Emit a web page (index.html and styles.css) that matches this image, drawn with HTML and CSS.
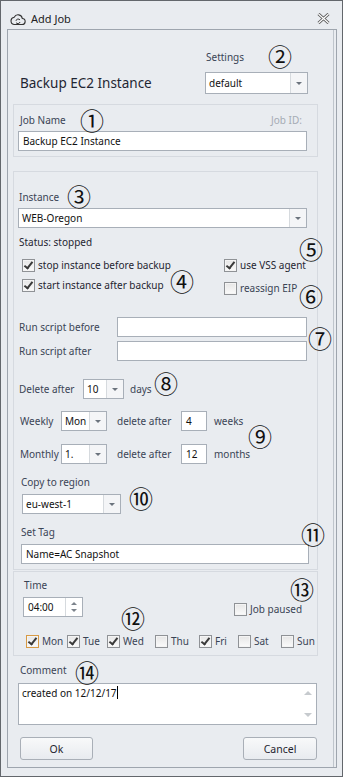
FILE: index.html
```html
<!DOCTYPE html>
<html lang="en">
<head>
    <meta charset="UTF-8">
    <meta name="viewport" content="width=device-width, initial-scale=1.0">
    <title>Add Job</title>
    <link rel="stylesheet" href="styles.css">
</head>
<body>
    <div class="window">
        <div class="titlebar">
            <svg class="app-icon" width="16" height="14" viewBox="0 0 16 14">
                <path d="M4 12.5 H12 A3 3 0 0 0 12.3 6.5 A4.3 4.3 0 0 0 4.2 5.2 A3.7 3.7 0 0 0 4 12.5 Z" fill="none" stroke="#333" stroke-width="1.1"/>
                <path d="M6 8.8 A2.2 2.2 0 0 1 10 8" fill="none" stroke="#333" stroke-width="1"/>
                <path d="M10 10 A2.2 2.2 0 0 1 6 10.6" fill="none" stroke="#333" stroke-width="1"/>
            </svg>
            <span class="title">Add Job</span>
            <svg class="close" width="13" height="11" viewBox="0 0 13 11">
                <path d="M1.5 1 L11.5 10 M11.5 1 L1.5 10" stroke="#555" stroke-width="3"/>
                <path d="M1.5 1 L11.5 10 M11.5 1 L1.5 10" stroke="#fff" stroke-width="1.2"/>
            </svg>
        </div>

        <div class="frame">
            <div class="header">
                <div class="job-title">Backup EC2 Instance</div>
                <div class="settings">
                    <div class="label">Settings</div>
                    <div class="select settings-select"><span>default</span><i class="drop"></i></div>
                </div>
            </div>

            <div class="group job-group">
                <div class="label-row">
                    <span class="label">Job Name</span>
                    <span class="job-id">Job ID:</span>
                </div>
                <div class="input job-input">Backup EC2 Instance</div>
            </div>

            <div class="group instance-group">
                <div class="label instance-label">Instance</div>
                <div class="select instance-select"><span>WEB-Oregon</span><i class="drop"></i></div>
                <div class="status">Status: stopped</div>

                <div class="checks">
                    <div class="check-col left-col">
                        <label class="check row20"><i class="box on"></i>stop instance before backup</label>
                        <label class="check row20"><i class="box on"></i>start instance after backup</label>
                    </div>
                    <div class="check-col">
                        <label class="check row20"><i class="box on"></i>use VSS agent</label>
                        <label class="check row20 eip"><i class="box"></i>reassign EIP</label>
                    </div>
                </div>

                <div class="script-row first">
                    <span class="label script-label">Run script before</span>
                    <div class="input script-input"></div>
                </div>
                <div class="script-row">
                    <span class="label script-label">Run script after</span>
                    <div class="input script-input"></div>
                </div>

                <div class="row delete-row">
                    <span class="label delete-label">Delete after</span>
                    <div class="select small-select"><span>10</span><i class="drop"></i></div>
                    <span class="label days">days</span>
                </div>
                <div class="row weekly-row">
                    <span class="label period-label">Weekly</span>
                    <div class="select period-select"><span>Mon</span><i class="drop"></i></div>
                    <span class="label after-label">delete after</span>
                    <div class="input num-input">4</div>
                    <span class="label unit">weeks</span>
                </div>
                <div class="row monthly-row">
                    <span class="label period-label">Monthly</span>
                    <div class="select period-select"><span>1.</span><i class="drop"></i></div>
                    <span class="label after-label">delete after</span>
                    <div class="input num-input">12</div>
                    <span class="label unit">months</span>
                </div>

                <div class="label sub-label copy-label">Copy to region</div>
                <div class="select region-select"><span>eu-west-1</span><i class="drop"></i></div>

                <div class="label sub-label tag-label">Set Tag</div>
                <div class="input tag-input">Name=AC Snapshot</div>
            </div>

            <div class="group time-group">
                <div class="label time-label">Time</div>
                <div class="time-row">
                    <div class="spin">
                        <span>04:00</span>
                        <div class="spin-btns"><i class="up"></i><i class="down"></i></div>
                    </div>
                    <label class="check paused"><i class="box"></i>Job paused</label>
                </div>
                <div class="days-row">
                    <label class="check"><i class="box on hover"></i>Mon</label>
                    <label class="check"><i class="box on"></i>Tue</label>
                    <label class="check"><i class="box on"></i>Wed</label>
                    <label class="check"><i class="box"></i>Thu</label>
                    <label class="check"><i class="box on"></i>Fri</label>
                    <label class="check"><i class="box"></i>Sat</label>
                    <label class="check"><i class="box"></i>Sun</label>
                </div>
            </div>

            <div class="label comment-label">Comment</div>
            <div class="textarea">
                <div class="text">created on 12/12/17<span class="caret"></span></div>
                <div class="scroll"><i class="up"></i><i class="down"></i></div>
            </div>

            <div class="buttons">
                <button class="btn">Ok</button>
                <button class="btn">Cancel</button>
            </div>
        </div>

        <span class="callout c1">①</span>
        <span class="callout c2">②</span>
        <span class="callout c3">③</span>
        <span class="callout c4">④</span>
        <span class="callout c5">⑤</span>
        <span class="callout c6">⑥</span>
        <span class="callout c7">⑦</span>
        <span class="callout c8">⑧</span>
        <span class="callout c9">⑨</span>
        <span class="callout c10">⑩</span>
        <span class="callout c11">⑪</span>
        <span class="callout c12">⑫</span>
        <span class="callout c13">⑬</span>
        <span class="callout c14">⑭</span>
    </div>
</body>
</html>
```

FILE: styles.css
```css
body {
    margin: 0;
    font-family: "Noto Sans", sans-serif;
    font-size: 10px;
    color: #242b38;
}
.window {
    position: relative;
    width: 343px;
    height: 777px;
    box-sizing: border-box;
    border: 1px solid #63676c;
    background-color: #e9ecf0;
    padding: 0 5px 0 6px;
}

/* title bar */
.titlebar {
    height: 28px;
    box-sizing: border-box;
    padding: 7px 0 0 3px;
    display: flex;
    align-items: center;
}
.app-icon {
    margin-right: 5px;
}
.title {
    font-size: 11px;
    color: #222;
}
.close {
    margin-left: auto;
    margin-right: 7px;
}

/* main frame */
.frame {
    border: 1px solid #9ea5ae;
    box-shadow: inset -2px 0 0 #e9ecf0, inset -3px 0 0 #bfc5cc;
    padding: 0 18px 7px 5px;
}
.header {
    height: 74px;
    box-sizing: border-box;
    display: flex;
    align-items: flex-end;
    justify-content: space-between;
    padding: 0 10px 10px 7px;
}
.job-title {
    font-size: 13.5px;
    line-height: 20px;
    margin-bottom: 1px;
    color: #1f2633;
}
.settings .label {
    margin: 0 0 8px 1px;
}
.label {
    color: #3a4455;
    line-height: 14px;
}

/* inputs */
.input, .select, .spin, .textarea {
    box-sizing: border-box;
    height: 20px;
    border: 1px solid #a8afb8;
    background-color: #fff;
    color: #111;
    line-height: 18px;
}
.input {
    padding-left: 4px;
}
.select {
    display: flex;
}
.select span {
    flex: 1;
    padding-left: 3px;
}
.drop {
    width: 16px;
    border-left: 1px solid #d6dade;
    background-color: #f4f5f7;
    display: flex;
    align-items: center;
    justify-content: center;
}
.drop::after {
    content: "";
    border-left: 3px solid transparent;
    border-right: 3px solid transparent;
    border-top: 3px solid #6b737d;
}
.settings-select {
    width: 103px;
    height: 22px;
    line-height: 20px;
}

/* groups */
.group {
    border: 1px solid #d6dae0;
    padding: 0 10px 5px 4px;
}
.label-row {
    display: flex;
    justify-content: space-between;
    margin-top: 8px;
    padding-left: 2px;
}
.job-id {
    color: #a5abb4;
    line-height: 14px;
    margin-right: 5px;
}
.job-input {
    margin-top: 4px;
}

.instance-group {
    margin-top: 14px;
}
.instance-label {
    margin: 18px 0 0 1px;
}
.instance-select {
    margin-top: 4px;
}
.status {
    margin: 7px 0 0 1px;
    line-height: 14px;
    color: #1f2530;
}
.checks {
    display: flex;
    margin-top: 6px;
}
.left-col {
    width: 206px;
}
.check {
    display: flex;
    align-items: center;
    gap: 3px;
    color: #1f2530;
    line-height: 14px;
}
.row20 {
    height: 20px;
}
.left-col .check {
    margin-left: 4px;
}
.eip {
    margin-top: 3px;
    color: #3a4455;
}
.box {
    position: relative;
    width: 13px;
    height: 13px;
    box-sizing: border-box;
    border: 1px solid #8f9296;
    background: linear-gradient(#e6e6e6, #fbfbfb);
    box-shadow: inset 0 0 0 1px #f4f4f4;
}
.box.on::after {
    content: "";
    position: absolute;
    left: 3px;
    top: 0;
    width: 3px;
    height: 7px;
    border: solid #3a3a3a;
    border-width: 0 2px 2px 0;
    transform: rotate(38deg);
}
.box.hover {
    border-color: #d79a45;
}

.script-row {
    display: flex;
    margin-top: 4px;
}
.script-row.first {
    margin-top: 19px;
}
.script-label {
    width: 98px;
    margin-left: 1px;
    line-height: 20px;
}
.script-input {
    width: 190px;
}

.row {
    display: flex;
    align-items: center;
}
.delete-row {
    margin-top: 18px;
}
.weekly-row {
    margin-top: 12px;
}
.monthly-row {
    margin-top: 13px;
}
.delete-label {
    width: 64px;
    margin-left: 1px;
}
.small-select {
    width: 41px;
}
.days {
    margin-left: 6px;
}
.period-label {
    width: 41px;
    margin-left: 2px;
}
.period-select {
    width: 46px;
}
.after-label {
    width: 64px;
    margin-left: 10px;
}
.num-input {
    width: 26px;
}
.unit {
    margin-left: 7px;
}
.sub-label {
    margin-left: 3px;
}
.copy-label {
    margin-top: 11px;
}
.region-select {
    width: 99px;
    margin: 5px 0 0 4px;
}
.tag-label {
    margin-top: 11px;
}
.tag-input {
    width: 288px;
    margin: 5px 0 0 3px;
}

/* time group */
.time-group {
    margin-top: 1px;
    padding-bottom: 7px;
}
.time-label {
    margin: 6px 0 0 6px;
}
.time-row {
    display: flex;
    margin-top: 5px;
}
.spin {
    width: 60px;
    margin-left: 5px;
    display: flex;
}
.spin span {
    flex: 1;
    padding-left: 4px;
}
.spin-btns {
    width: 16px;
    border-left: 1px solid #d6dade;
    display: flex;
    flex-direction: column;
    align-items: center;
    justify-content: center;
    gap: 4px;
}
.up, .down {
    display: block;
    border-left: 3px solid transparent;
    border-right: 3px solid transparent;
}
.up {
    border-bottom: 3px solid #7c838c;
}
.down {
    border-top: 3px solid #7c838c;
}
.paused {
    margin-left: 151px;
    align-self: flex-end;
    height: 16px;
    color: #3a4455;
}
.days-row {
    display: grid;
    grid-template-columns: 41px 40px 48px 44px 39px 43px auto;
    margin: 17px 0 0 8px;
}
.days-row .check {
    color: #3a4455;
}

/* comment */
.comment-label {
    margin: 7px 0 0 7px;
}
.textarea {
    display: flex;
    width: 299px;
    height: 42px;
    margin: 6px 0 0 5px;
}
.textarea .text {
    flex: 1;
    padding: 1px 3px;
    line-height: 16px;
}
.caret {
    display: inline-block;
    width: 1px;
    height: 13px;
    background-color: #000;
    vertical-align: -2px;
}
.scroll {
    width: 16px;
    display: flex;
    flex-direction: column;
    align-items: center;
    justify-content: space-between;
    padding: 7px 0;
}
.scroll .up {
    border-bottom-color: #c6cace;
    border-left-width: 4px;
    border-right-width: 4px;
    border-bottom-width: 4px;
}
.scroll .down {
    border-top-color: #c6cace;
    border-left-width: 4px;
    border-right-width: 4px;
    border-top-width: 4px;
}

.buttons {
    display: flex;
    justify-content: space-between;
    margin: 12px 1px 0 7px;
}
.btn {
    width: 73px;
    height: 23px;
    border: 1px solid #a9afb7;
    border-radius: 3px;
    background: linear-gradient(#f8f9fa, #e8ebef);
    font-family: "Noto Sans", sans-serif;
    font-size: 10.5px;
    color: #1f2530;
    padding: 0;
}
.btn + .btn {
    width: 74px;
}

/* numbered callouts drawn over the dialog */
.callout {
    position: absolute;
    width: 24px;
    height: 22px;
    line-height: 22px;
    text-align: center;
    font-family: "Noto Sans CJK JP", sans-serif;
    font-size: 24px;
    color: #111;
}
.c1 { left: 79px; top: 108px; }
.c2 { left: 267px; top: 44px; }
.c3 { left: 66px; top: 184px; }
.c4 { left: 169px; top: 269px; }
.c5 { left: 298px; top: 237px; }
.c6 { left: 298px; top: 284px; }
.c7 { left: 307px; top: 326px; }
.c8 { left: 153px; top: 371px; }
.c9 { left: 247px; top: 424px; }
.c10 { left: 128px; top: 486px; }
.c11 { left: 300px; top: 522px; }
.c12 { left: 120px; top: 606px; }
.c13 { left: 289px; top: 577px; }
.c14 { left: 74px; top: 660px; }
```
